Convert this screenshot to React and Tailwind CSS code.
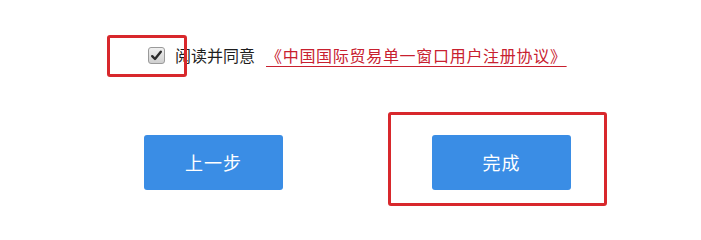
import React from "react";

function CheckBox() {
  return (
    <div className="relative w-[17px] h-[17px]">
      <div className="w-[17px] h-[17px] rounded-[3px] border border-[#9a9a9a] bg-gradient-to-b from-[#f0f0f0] to-[#cfcfcf] flex items-center justify-center">
        <svg width="13" height="13" viewBox="0 0 13 13">
          <path d="M2.2 7.2 L5 10 L10.8 2.8" fill="none" stroke="#2b2b2b" strokeWidth="2.4" strokeLinecap="round" strokeLinejoin="round" />
        </svg>
      </div>
      <div className="absolute left-[-41px] top-[-12px] w-[80px] h-[42px] border-[3px] border-[#d8282c] rounded-[3px]" />
    </div>
  );
}

export default function App() {
  return (
    <div
      className="w-[701px] h-[221px] bg-white overflow-hidden"
      style={{ fontFamily: '"Noto Sans CJK SC", "Noto Sans", sans-serif' }}
    >
      <div className="pt-[42px] pl-[148px] flex items-center h-[68px] box-border">
        <CheckBox />
        <span className="ml-[10px] text-[16px] leading-6 text-[#1e1e1e]">阅读并同意</span>
        <a className="ml-[11px] text-[16px] leading-6 tracking-[0.7px] text-[#c8202f] underline underline-offset-[4px] decoration-[#c8202f]">
          《中国国际贸易单一窗口用户注册协议》
        </a>
      </div>
      <div className="mt-[67px] pl-[144px] flex gap-[149px]">
        <button className="w-[139px] h-[55px] rounded-[3px] bg-[#3a8de5] text-white text-[18px] tracking-[1px]">
          上一步
        </button>
        <div className="relative">
          <button className="w-[139px] h-[55px] rounded-[3px] bg-[#3a8de5] text-white text-[18px] tracking-[1px]">
            完成
          </button>
          <div className="absolute left-[-44px] top-[-23px] w-[219px] h-[94px] border-[3px] border-[#d8282c] rounded-[3px]" />
        </div>
      </div>
    </div>
  );
}
